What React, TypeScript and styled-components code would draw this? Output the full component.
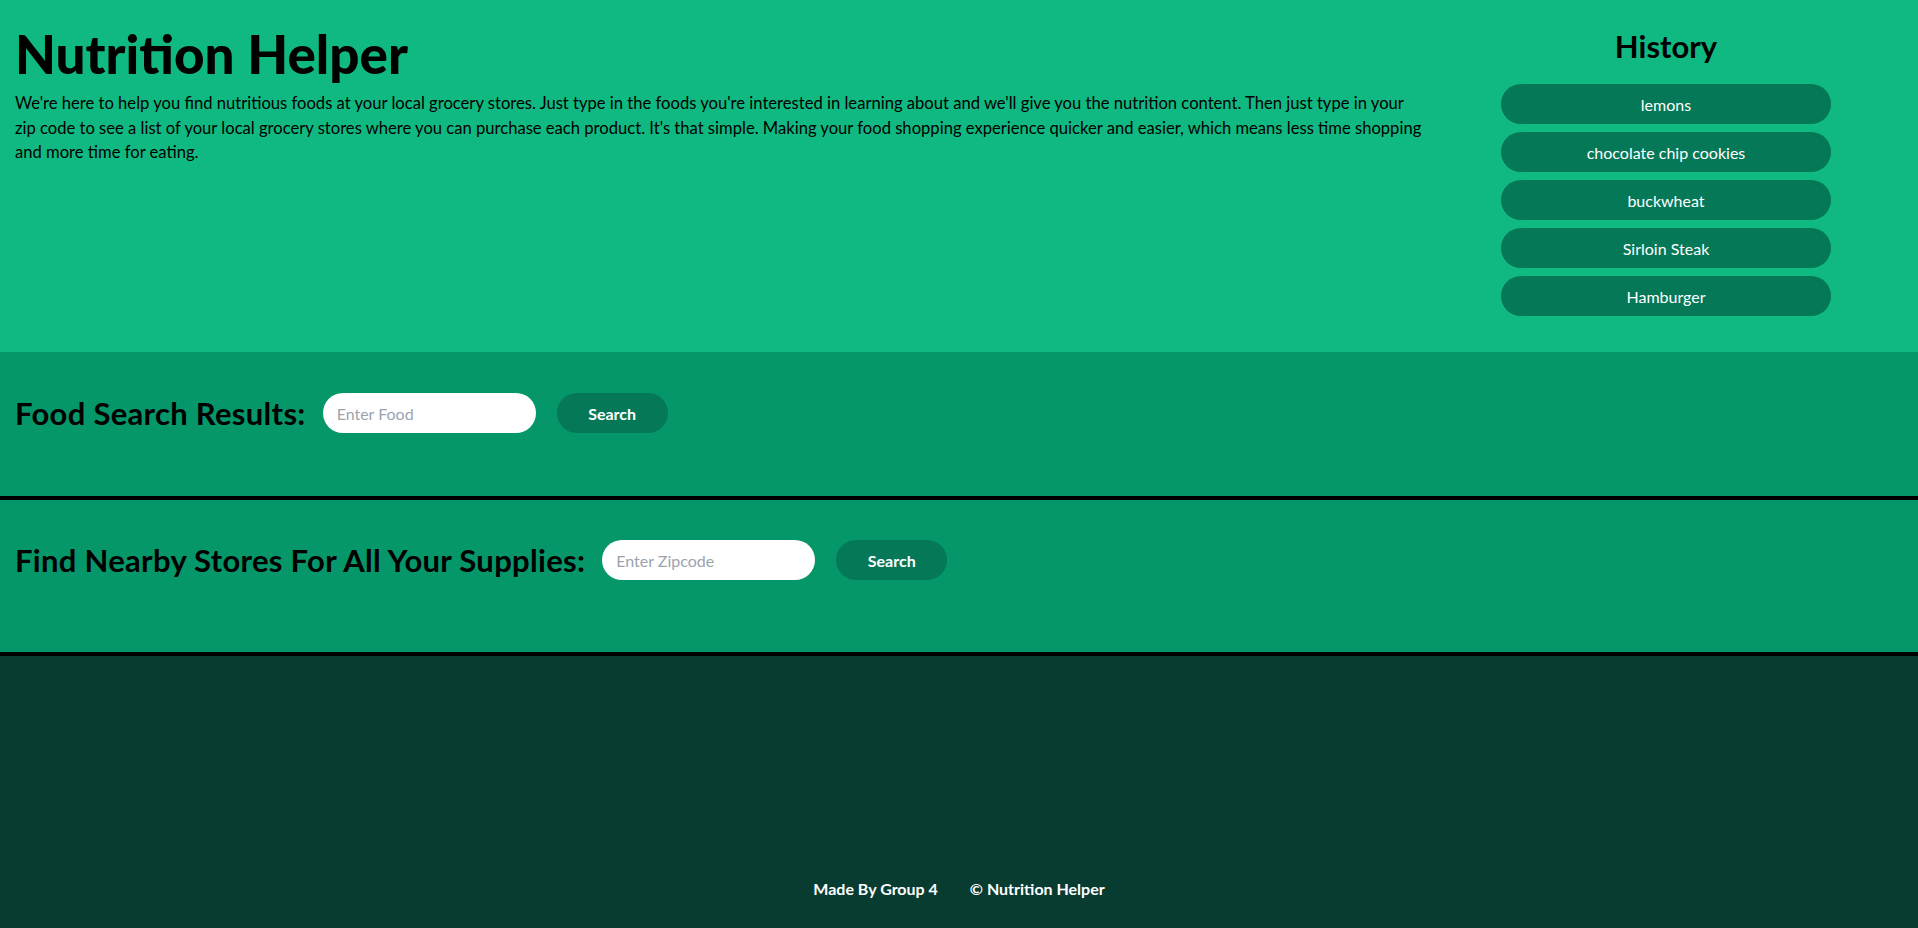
import styled, { createGlobalStyle } from "styled-components";

const history = [
  "lemons",
  "chocolate chip cookies",
  "buckwheat",
  "Sirloin Steak",
  "Hamburger",
];

const App = () => {
  return (
    <Page>
      <GlobalStyle />
      <Header>
        <Intro>
          <Title>Nutrition Helper</Title>
          <Blurb>
            We're here to help you find nutritious foods at your local grocery
            stores. Just type in the foods you're interested in learning about
            and we'll give you the nutrition content. Then just type in your
            zip&nbsp;code to see a list of your local grocery stores where you
            can purchase each product. It's that simple. Making your food
            shopping experience quicker and easier, which means less time
            shopping and more time for eating.
          </Blurb>
        </Intro>
        <History>
          <HistoryTitle>History</HistoryTitle>
          <HistoryList>
            {history.map((item) => (
              <HistoryBtn key={item}>{item}</HistoryBtn>
            ))}
          </HistoryList>
        </History>
      </Header>

      <Section $height={148} $top={41}>
        <SearchRow>
          <SectionTitle>Food Search Results:</SectionTitle>
          <Input placeholder="Enter Food" />
          <SearchBtn>Search</SearchBtn>
        </SearchRow>
      </Section>

      <Section $height={156} $top={40}>
        <SearchRow>
          <SectionTitle>Find Nearby Stores For All Your Supplies:</SectionTitle>
          <Input placeholder="Enter Zipcode" />
          <SearchBtn>Search</SearchBtn>
        </SearchRow>
      </Section>

      <Footer>
        <span>Made By Group 4</span>
        <span>© Nutrition Helper</span>
      </Footer>
    </Page>
  );
};

export default App;

const GlobalStyle = createGlobalStyle`
  * {
    box-sizing: border-box;
  }
  body {
    margin: 0;
    font-family: Lato, "Open Sans", sans-serif;
    color: black;
  }
`;

const Page = styled.div`
  min-height: 100vh;
  display: flex;
  flex-direction: column;
`;

const Header = styled.header`
  display: grid;
  grid-template-columns: 1fr 330px;
  column-gap: 60px;
  height: 352px;
  padding: 22px 87px 0 15px;
  background-color: #10b981;
`;

const Intro = styled.div``;

const Title = styled.h1`
  margin: 0;
  font-size: 53px;
  line-height: 64px;
  font-weight: 900;
`;

const Blurb = styled.p`
  max-width: 1417px;
  margin: 5px 0 0;
  font-size: 16.6px;
  line-height: 24.5px;
`;

const History = styled.aside`
  display: flex;
  flex-direction: column;
  align-items: center;
  padding-top: 7px;
`;

const HistoryTitle = styled.h2`
  margin: 0 0 21px;
  font-size: 31px;
  line-height: 34px;
  font-weight: 700;
`;

const HistoryList = styled.div`
  width: 100%;
  display: flex;
  flex-direction: column;
  gap: 8px;
`;

const HistoryBtn = styled.button`
  width: 100%;
  height: 40px;
  border: none;
  border-radius: 20px;
  background-color: #047857;
  color: white;
  font-family: inherit;
  font-size: 16px;
  cursor: pointer;
`;

const Section = styled.section<{ $height: number; $top: number }>`
  height: ${(props) => props.$height}px;
  padding: ${(props) => props.$top}px 15px 0;
  background-color: #059669;
  border-bottom: 4px solid black;
`;

const SearchRow = styled.div`
  display: flex;
  align-items: center;
  height: 40px;
`;

const SectionTitle = styled.h2`
  margin: 0 17px 0 0;
  font-size: 31px;
  letter-spacing: 0.3px;
  font-weight: 700;
  white-space: nowrap;
`;

const Input = styled.input`
  width: 213px;
  height: 40px;
  padding: 0 14px;
  border: none;
  border-radius: 20px;
  outline: none;
  font-family: inherit;
  font-size: 16px;

  &::placeholder {
    color: #9ca3af;
  }
`;

const SearchBtn = styled.button`
  width: 111px;
  height: 40px;
  margin-left: 21px;
  border: none;
  border-radius: 20px;
  background-color: #047857;
  color: white;
  font-family: inherit;
  font-size: 16px;
  font-weight: 700;
  cursor: pointer;
`;

const Footer = styled.footer`
  flex: 1;
  display: flex;
  align-items: flex-end;
  justify-content: center;
  gap: 32px;
  padding-bottom: 29px;
  background-color: #083c31;
  color: white;
  font-size: 16px;
  font-weight: 700;
  line-height: 20px;
`;
